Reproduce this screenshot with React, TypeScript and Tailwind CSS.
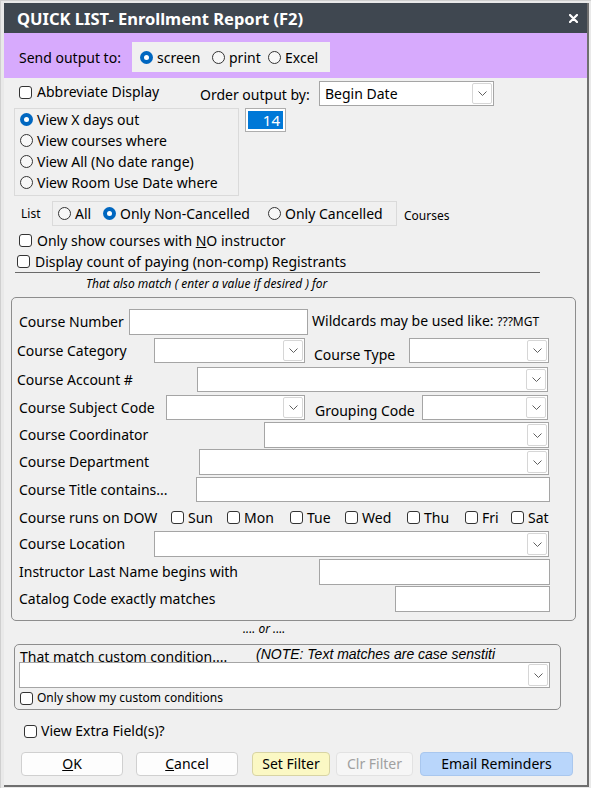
import React from "react";

function Check() {
  return <span className="inline-block h-[13px] w-[13px] shrink-0 rounded-[3px] border border-[#333] bg-white" />;
}

function Radio({ on = false }: { on?: boolean }) {
  if (on) {
    return (
      <span className="flex h-[13px] w-[13px] shrink-0 items-center justify-center rounded-full bg-[#0067c0]">
        <span className="h-[5px] w-[5px] rounded-full bg-white" />
      </span>
    );
  }
  return <span className="inline-block h-[13px] w-[13px] shrink-0 rounded-full border border-[#333] bg-[#f8f8f8]" />;
}

function Chevron() {
  return (
    <svg width="9" height="5" viewBox="0 0 9 5" className="text-[#606060]">
      <path d="M0.5 0.5 L4.5 4.5 L8.5 0.5" fill="none" stroke="currentColor" strokeWidth="1" />
    </svg>
  );
}

function Select({ className, value }: { className: string; value?: string }) {
  return (
    <div className={`flex shrink-0 items-stretch border border-[#a5a5a5] bg-white ${className}`}>
      <span className="flex flex-1 items-center pl-[5px]">{value}</span>
      <span className="m-[1px] flex w-[20px] items-center justify-center rounded-[2px] border border-[#d6d6d6] bg-white">
        <Chevron />
      </span>
    </div>
  );
}

function TextBox({ className }: { className: string }) {
  return <div className={`shrink-0 border border-[#a5a5a5] bg-white ${className}`} />;
}

const days = [
  { d: "Sun", w: "w-[56px]" },
  { d: "Mon", w: "w-[63px]" },
  { d: "Tue", w: "w-[55px]" },
  { d: "Wed", w: "w-[62px]" },
  { d: "Thu", w: "w-[58px]" },
  { d: "Fri", w: "w-[46px]" },
  { d: "Sat", w: "w-[40px]" },
];

export default function App() {
  return (
    <div className="h-[788px] w-[591px] overflow-hidden border-l border-t border-[#cfcfcf] bg-[#e9e9e9] pb-[1px] pl-[3px] pr-[2px] pt-[2px] font-['Noto_Sans',sans-serif] text-[14px] leading-none text-black">
      <div className="flex h-full flex-col border-b-2 border-r-2 border-[#6f6f6f] bg-[#f0f0f0]">
        {/* Title bar */}
        <div className="flex h-[30px] shrink-0 items-center justify-between bg-[#3f4750] pl-[13px] pr-[9px]">
          <span className="mt-[2px] text-[16.5px] font-bold text-white">QUICK LIST- Enrollment Report (F2)</span>
          <svg width="9" height="9" viewBox="0 0 9 9">
            <path d="M1 1 L8 8 M8 1 L1 8" stroke="white" strokeWidth="2.2" strokeLinecap="round" />
          </svg>
        </div>

        {/* Output target */}
        <div className="flex h-[45px] shrink-0 items-start bg-[#d7aafd] pl-[15px] pt-[9px]">
          <span className="flex h-[30px] w-[113px] items-center pt-[1px]">Send output to:</span>
          <div className="flex h-[30px] w-[198px] items-center bg-[#f0f0f0] pl-[8px] pt-[1px]">
            <label className="flex w-[72px] items-center gap-[4px]">
              <Radio on />
              screen
            </label>
            <label className="flex w-[56px] items-center gap-[4px]">
              <Radio />
              print
            </label>
            <label className="flex items-center gap-[4px]">
              <Radio />
              Excel
            </label>
          </div>
        </div>

        {/* Abbreviate / order */}
        <div className="flex h-[30px] shrink-0 items-start">
          <label className="ml-[15px] mt-[7px] flex h-[14px] w-[181px] items-center gap-[5px]">
            <Check />
            Abbreviate Display
          </label>
          <span className="mt-[10px] w-[119px]">Order output by:</span>
          <Select className="mt-[3px] h-[25px] w-[175px]" value="Begin Date" />
        </div>

        {/* Date range */}
        <div className="flex shrink-0 items-start">
          <div className="ml-[10px] flex h-[88px] w-[225px] flex-col border border-[#dadada] pl-[5px]">
            <label className="flex h-[21px] items-center gap-[4px]">
              <Radio on />
              View X days out
            </label>
            <label className="flex h-[21px] items-center gap-[4px]">
              <Radio />
              View courses where
            </label>
            <label className="flex h-[21px] items-center gap-[4px]">
              <Radio />
              View All (No date range)
            </label>
            <label className="flex h-[21px] items-center gap-[4px]">
              <Radio />
              View Room Use Date where
            </label>
          </div>
          <div className="ml-[6px] h-[24px] w-[41px] border border-[#adadad] bg-white p-[2px]">
            <div className="flex h-full items-center justify-end bg-[#0078d7] pr-[3px] text-[15px] text-white">14</div>
          </div>
        </div>

        {/* List filter */}
        <div className="mt-[5px] flex h-[25px] shrink-0 items-center">
          <span className="ml-[17px] w-[31px] text-[12px]">List</span>
          <div className="flex h-[25px] w-[345px] items-center border border-[#dadada] pl-[5px]">
            <label className="flex w-[45px] items-center gap-[4px]">
              <Radio />
              All
            </label>
            <label className="flex w-[165px] items-center gap-[4px]">
              <Radio on />
              Only Non-Cancelled
            </label>
            <label className="flex items-center gap-[4px]">
              <Radio />
              Only Cancelled
            </label>
          </div>
          <span className="ml-[7px] mt-[4px] text-[12px]">Courses</span>
        </div>

        <label className="ml-[15px] mt-[4px] flex h-[21px] shrink-0 items-center gap-[5px]">
          <Check />
          <span>
            Only show courses with <u>N</u>O instructor
          </span>
        </label>
        <label className="ml-[11px] flex h-[22px] w-[525px] shrink-0 items-center gap-[5px] border-b border-[#6a6a6a] pl-[2px]">
          <Check />
          Display count of paying (non-comp) Registrants
        </label>
        <div className="flex h-[22px] shrink-0 items-center pl-[82px] text-[12px] italic">
          That also match ( enter a value if desired ) for
        </div>

        {/* Criteria group */}
        <div className="ml-[7px] mt-[2px] flex h-[324px] w-[565px] shrink-0 flex-col rounded-[5px] border border-[#8d8d8d]">
          <div className="mt-[11px] flex h-[26px] items-center">
            <span className="ml-[7px] w-[110px]">Course Number</span>
            <TextBox className="h-[26px] w-[179px]" />
            <span className="-mt-[2px] ml-[4px]">
              Wildcards may be used like: <span className="text-[12px]">???MGT</span>
            </span>
          </div>
          <div className="mt-[3px] flex h-[25px] items-center">
            <span className="ml-[5px] w-[137px]">Course Category</span>
            <Select className="h-[25px] w-[151px]" />
            <span className="ml-[9px] mt-[8px] w-[95px]">Course Type</span>
            <Select className="h-[25px] w-[140px]" />
          </div>
          <div className="mt-[4px] flex h-[25px] items-center">
            <span className="ml-[5px] w-[180px]">Course Account #</span>
            <Select className="h-[25px] w-[351px]" />
          </div>
          <div className="mt-[3px] flex h-[25px] items-center">
            <span className="ml-[7px] w-[147px]">Course Subject Code</span>
            <Select className="h-[25px] w-[139px]" />
            <span className="ml-[10px] mt-[6px] w-[107px]">Grouping Code</span>
            <Select className="h-[25px] w-[126px]" />
          </div>
          <div className="mt-[2px] flex h-[26px] items-center">
            <span className="ml-[7px] w-[245px]">Course Coordinator</span>
            <Select className="h-[26px] w-[285px]" />
          </div>
          <div className="mt-[1px] flex h-[26px] items-center">
            <span className="ml-[7px] w-[180px]">Course Department</span>
            <Select className="h-[26px] w-[350px]" />
          </div>
          <div className="mt-[2px] flex h-[25px] items-center">
            <span className="ml-[7px] w-[177px]">Course Title contains...</span>
            <TextBox className="h-[25px] w-[354px]" />
          </div>
          <div className="mt-[3px] flex h-[25px] items-center">
            <span className="ml-[7px] w-[152px]">Course runs on DOW</span>
            {days.map((x) => (
              <label key={x.d} className={`flex items-center gap-[4px] ${x.w}`}>
                <Check />
                {x.d}
              </label>
            ))}
          </div>
          <div className="mt-[1px] flex h-[26px] items-center">
            <span className="ml-[7px] w-[135px]">Course Location</span>
            <Select className="h-[26px] w-[395px]" />
          </div>
          <div className="mt-[2px] flex h-[26px] items-center">
            <span className="ml-[7px] w-[300px]">Instructor Last Name begins with</span>
            <TextBox className="h-[26px] w-[231px]" />
          </div>
          <div className="mt-[1px] flex h-[26px] items-center">
            <span className="ml-[7px] w-[376px]">Catalog Code exactly matches</span>
            <TextBox className="h-[26px] w-[155px]" />
          </div>
        </div>

        <div className="flex h-[16px] shrink-0 items-center pl-[239px] text-[12px] italic">.... or ....</div>

        {/* Custom condition */}
        <div className="ml-[10px] mt-[7px] flex h-[66px] w-[547px] shrink-0 flex-col rounded-[5px] border border-[#8d8d8d]">
          <div className="flex h-[17px] pl-[5px] pt-[5px]">
            <span className="w-[236px]">That match custom condition....</span>
            <span className="-mt-[3px] font-['Liberation_Sans',sans-serif] italic">
              (NOTE: Text matches are case senstiti
            </span>
          </div>
          <Select className="relative ml-[4px] h-[26px] w-[531px]" />
          <label className="flex h-[20px] items-center gap-[4px] pl-[5px] text-[12px]">
            <Check />
            Only show my custom conditions
          </label>
        </div>

        <label className="ml-[20px] mt-[10px] flex h-[22px] shrink-0 items-center gap-[4px]">
          <Check />
          View Extra Field(s)?
        </label>

        {/* Buttons */}
        <div className="mt-[9px] flex h-[25px] shrink-0 pt-[1px]">
          <button className="ml-[17px] w-[102px] rounded-[4px] border border-[#d0d0d0] bg-[#fdfdfd]">
            <u>O</u>K
          </button>
          <button className="ml-[13px] w-[102px] rounded-[4px] border border-[#d0d0d0] bg-[#fdfdfd]">
            <u>C</u>ancel
          </button>
          <button className="ml-[14px] w-[78px] rounded-[4px] border border-[#d8d4a4] bg-[#fbf8c4]">Set Filter</button>
          <button className="ml-[6px] w-[77px] rounded-[4px] border border-[#e2e2e2] bg-[#f6f6f6] text-[#a0a0a0]">
            Clr Filter
          </button>
          <button className="ml-[7px] w-[153px] rounded-[4px] border border-[#a9c7ee] bg-[#b9d6fb]">Email Reminders</button>
        </div>
      </div>
    </div>
  );
}
